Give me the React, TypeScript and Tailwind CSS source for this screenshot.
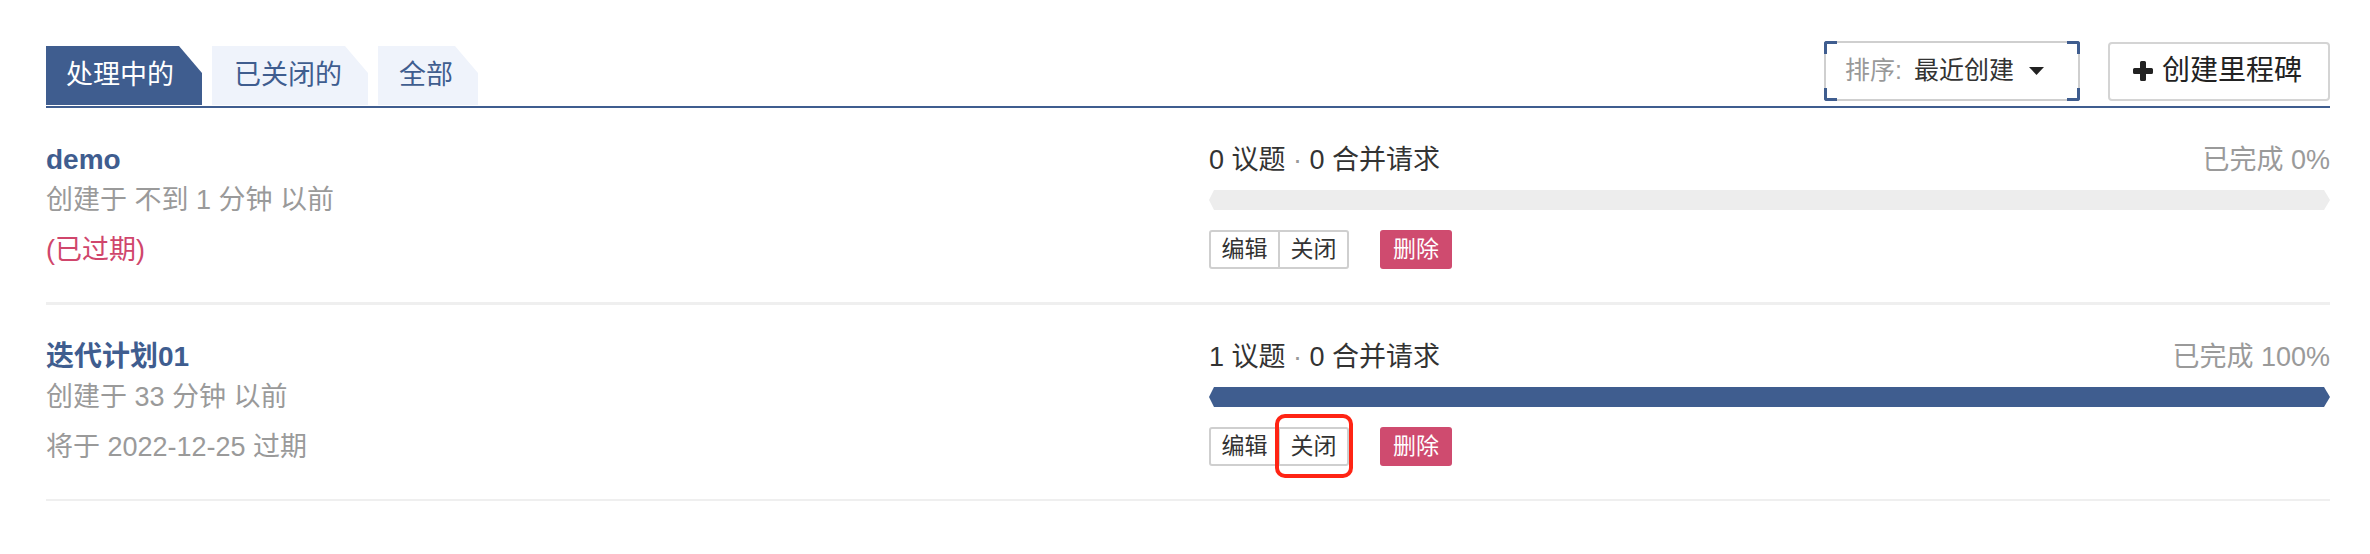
const milestones = [
  {
    title: 'demo',
    created: '创建于 不到 1 分钟 以前',
    due: '(已过期)',
    overdue: true,
    issues: 0,
    pulls: 0,
    percent: 0,
    marked: false,
  },
  {
    title: '迭代计划01',
    created: '创建于 33 分钟 以前',
    due: '将于 2022-12-25 过期',
    overdue: false,
    issues: 1,
    pulls: 0,
    percent: 100,
    marked: true,
  },
];

const tabs = [
  { label: '处理中的', active: true, w: 'w-[156px] pl-[20px]' },
  { label: '已关闭的', active: false, w: 'w-[156px] pl-[22px]' },
  { label: '全部', active: false, w: 'w-[100px] pl-[21px]' },
];

export default function App() {
  return (
    <div className="min-h-[554px] bg-white pl-[46px] pr-[40px] pt-[40px] font-['Liberation_Sans','Noto_Sans_CJK_SC',sans-serif]">
      {/* Header: tabs + sort + create */}
      <div className="flex items-end justify-between border-b-2 border-[#3f5d8f] pb-px">
        <div className="flex gap-[10px] pt-[6px]">
          {tabs.map((t) => (
            <div
              key={t.label}
              className={`h-[59px] text-[27px] leading-[59px] [clip-path:polygon(0_0,calc(100%_-_23px)_0,100%_27px,100%_100%,0_100%)] ${t.w} ${
                t.active ? 'bg-[#3f5d8f] text-white' : 'bg-[#eff3fb] text-[#3f5d8f]'
              }`}
            >
              {t.label}
            </div>
          ))}
        </div>

        <div className="mb-[4px] flex items-center gap-[28px]">
          <div className="relative flex h-[60px] w-[256px] items-center rounded-[3px] border-2 border-[#cfcfcf] pl-[19px] text-[25px]">
            <span className="text-[#999]">排序:</span>
            <span className="ml-[12px] text-[#333]">最近创建</span>
            <svg className="ml-[15px] h-[8px] w-[15px]" viewBox="0 0 15 8">
              <path d="M0 0h15L7.5 8z" fill="#222" />
            </svg>
            {/* corner brackets */}
            <span className="absolute -left-[2px] -top-[2px] h-[13px] w-[13px] rounded-tl-[3px] border-l-[3px] border-t-[3px] border-[#3f5d8f]" />
            <span className="absolute -right-[2px] -top-[2px] h-[13px] w-[13px] rounded-tr-[3px] border-r-[3px] border-t-[3px] border-[#3f5d8f]" />
            <span className="absolute -bottom-[2px] -left-[2px] h-[13px] w-[13px] rounded-bl-[3px] border-b-[3px] border-l-[3px] border-[#3f5d8f]" />
            <span className="absolute -bottom-[2px] -right-[2px] h-[13px] w-[13px] rounded-br-[3px] border-b-[3px] border-r-[3px] border-[#3f5d8f]" />
          </div>

          <button className="flex h-[59px] w-[222px] items-center rounded-[4px] border-2 border-[#d4d4d4] bg-white pl-[23px] text-[28px] text-[#222]">
            <svg className="h-[20px] w-[20px]" viewBox="0 0 20 20">
              <path
                d="M7 1.5a1.5 1.5 0 0 1 1.5-1.5h3a1.5 1.5 0 0 1 1.5 1.5V7h5.5A1.5 1.5 0 0 1 20 8.5v3a1.5 1.5 0 0 1-1.5 1.5H13v5.5a1.5 1.5 0 0 1-1.5 1.5h-3A1.5 1.5 0 0 1 7 18.5V13H1.5A1.5 1.5 0 0 1 0 11.5v-3A1.5 1.5 0 0 1 1.5 7H7z"
                fill="#222"
              />
            </svg>
            <span className="ml-[9px]">创建里程碑</span>
          </button>
        </div>
      </div>

      {/* Milestone rows */}
      {milestones.map((m, i) => (
        <div
          key={m.title}
          className={`grid grid-cols-[1163px_1fr] pb-[32px] pt-[31px] ${
            i === 0 ? 'border-b-[3px] border-[#efefef]' : 'border-b-2 border-[#efefef]'
          }`}
        >
          <div>
            <div className="text-[28px] font-bold leading-[41px] text-[#3f5d8f]">{m.title}</div>
            <div className="text-[27px] leading-[40px] text-[#9a9a9a]">{m.created}</div>
            <div
              className={`mt-[10px] text-[27px] leading-[40px] ${
                m.overdue ? 'text-[#d0466c]' : 'text-[#9a9a9a]'
              }`}
            >
              {m.due}
            </div>
          </div>

          <div className="pt-px">
            <div className="flex items-center justify-between text-[27px] leading-[40px]">
              <div className="text-[#333]">
                {m.issues} 议题 <span className="text-[#999]">·</span> {m.pulls} 合并请求
              </div>
              <div className="text-[#9a9a9a]">已完成 {m.percent}%</div>
            </div>

            <div className="mt-[10px] h-[20px] bg-[#ededed] [clip-path:polygon(5px_0,calc(100%_-_6px)_0,100%_50%,calc(100%_-_6px)_100%,5px_100%,0_50%)]">
              <div className="h-full bg-[#3f5d8f]" style={{ width: `${m.percent}%` }} />
            </div>

            <div className="mt-[20px] flex items-center">
              <div className="flex h-[39px] rounded-[3px] border-2 border-[#cfcfcf] text-[23px] text-[#333]">
                <span className="flex w-[69px] items-center justify-center border-r-2 border-[#cfcfcf]">编辑</span>
                <span className="relative flex w-[67px] items-center justify-center">
                  关闭
                  {m.marked && (
                    <span className="absolute -bottom-[14px] -left-[5px] -right-[6px] -top-[15px] rounded-[10px] border-[4px] border-[#ff2414]" />
                  )}
                </span>
              </div>
              <button className="ml-[31px] flex h-[39px] w-[72px] items-center justify-center rounded-[3px] bg-[#cf4b6f] text-[23px] text-white">
                删除
              </button>
            </div>
          </div>
        </div>
      ))}
    </div>
  );
}
